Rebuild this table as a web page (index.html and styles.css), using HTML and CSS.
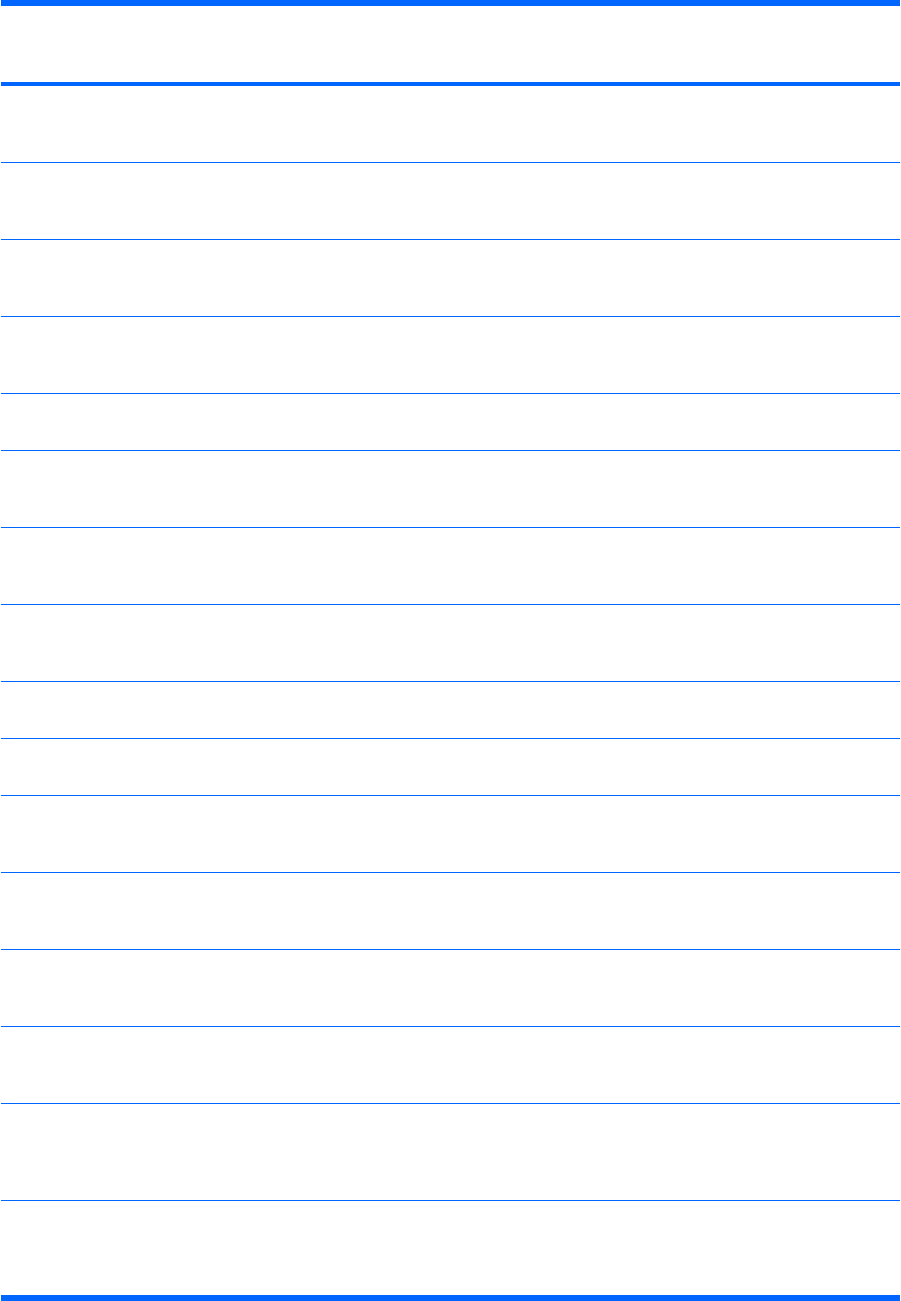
FILE: index.html
```html
<!DOCTYPE html>
<html lang="en">
<head>
  <meta charset="UTF-8" />
  <title>Table</title>
  <link rel="stylesheet" href="styles.css">
</head>
<body>
  <div class="table">
    <div class="row head"><div class="cell"></div><div class="cell"></div><div class="cell"></div></div>
    <div class="row"><div class="cell"></div><div class="cell"></div><div class="cell"></div></div>
    <div class="row"><div class="cell"></div><div class="cell"></div><div class="cell"></div></div>
    <div class="row"><div class="cell"></div><div class="cell"></div><div class="cell"></div></div>
    <div class="row"><div class="cell"></div><div class="cell"></div><div class="cell"></div></div>
    <div class="row short"><div class="cell"></div><div class="cell"></div><div class="cell"></div></div>
    <div class="row"><div class="cell"></div><div class="cell"></div><div class="cell"></div></div>
    <div class="row"><div class="cell"></div><div class="cell"></div><div class="cell"></div></div>
    <div class="row"><div class="cell"></div><div class="cell"></div><div class="cell"></div></div>
    <div class="row short"><div class="cell"></div><div class="cell"></div><div class="cell"></div></div>
    <div class="row short"><div class="cell"></div><div class="cell"></div><div class="cell"></div></div>
    <div class="row"><div class="cell"></div><div class="cell"></div><div class="cell"></div></div>
    <div class="row"><div class="cell"></div><div class="cell"></div><div class="cell"></div></div>
    <div class="row"><div class="cell"></div><div class="cell"></div><div class="cell"></div></div>
    <div class="row"><div class="cell"></div><div class="cell"></div><div class="cell"></div></div>
    <div class="row tall"><div class="cell"></div><div class="cell"></div><div class="cell"></div></div>
    <div class="row last"><div class="cell"></div><div class="cell"></div><div class="cell"></div></div>
  </div>
</body>
</html>
```

FILE: styles.css
```css
* {
  box-sizing: border-box;
}
body {
  margin: 0;
  background: #fff;
  font-family: "Liberation Sans", Arial, sans-serif;
}
.table {
  width: 899px;
  margin-left: 1px;
  border-top: 6px solid #0066ff;
}
.row {
  display: grid;
  grid-template-columns: 359px 90px 450px;
}
.cell {
  height: 77px;
  border-bottom: 1px solid #0066ff;
}
.head .cell {
  height: 80px;
  border-bottom-width: 4px;
}
.short .cell {
  height: 57px;
}
.tall .cell {
  height: 97px;
}
.last .cell {
  height: 100px;
  border-bottom-width: 6px;
}
```
